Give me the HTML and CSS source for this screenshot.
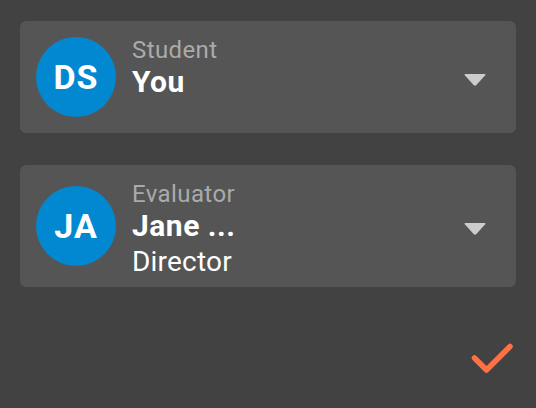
FILE: index.html
```html
<!DOCTYPE html>
<html>
<head>
<meta charset="utf-8">
<link rel="stylesheet" href="styles.css">
</head>
<body>
<div class="panel">
  <div class="card">
    <div class="avatar">DS</div>
    <div class="info">
      <div class="label">Student</div>
      <div class="name">You</div>
    </div>
    <svg class="chev" viewBox="0 0 24 14" width="24" height="14"><path d="M2.5 1 H21.5 Q23.5 1 22 2.6 L13.4 12 Q12 13.4 10.6 12 L2 2.6 Q0.5 1 2.5 1 Z" fill="#cccccc"/></svg>
  </div>
  <div class="card">
    <div class="avatar">JA</div>
    <div class="info">
      <div class="label">Evaluator</div>
      <div class="name">Jane ...</div>
      <div class="role">Director</div>
    </div>
    <svg class="chev" viewBox="0 0 24 14" width="24" height="14"><path d="M2.5 1 H21.5 Q23.5 1 22 2.6 L13.4 12 Q12 13.4 10.6 12 L2 2.6 Q0.5 1 2.5 1 Z" fill="#cccccc"/></svg>
  </div>
  <div class="actions">
    <svg class="check" viewBox="0 0 48 36" width="48" height="36"><polyline points="6.5,18 18.5,30 42,6.5" fill="none" stroke="#ff7043" stroke-width="5.5" stroke-linecap="round" stroke-linejoin="round"/></svg>
  </div>
</div>
</body>
</html>
```
FILE: styles.css
```css
html, body {
  margin: 0;
  padding: 0;
  background: #424242;
  font-family: Roboto, "Liberation Sans", sans-serif;
}
.panel {
  width: 536px;
  height: 408px;
  box-sizing: border-box;
  padding: 21px 20px 0 20px;
  display: flex;
  flex-direction: column;
  gap: 32px;
}
.card {
  background: #555555;
  border-radius: 6px;
  padding: 16px 29px 16px 16px;
  display: flex;
  align-items: center;
}
.avatar {
  width: 80px;
  height: 80px;
  border-radius: 50%;
  background: #0288d1;
  color: #fff;
  font-weight: 700;
  font-size: 34px;
  letter-spacing: 1px;
  display: flex;
  align-items: center;
  justify-content: center;
  flex: none;
}
.info {
  flex: 1;
  margin-left: 16px;
  margin-top: 2px;
  align-self: flex-start;
  display: flex;
  flex-direction: column;
}
.label {
  color: #aaaaaa;
  font-size: 24px;
  line-height: 23px;
  letter-spacing: 0.4px;
}
.name {
  color: #fff;
  font-weight: 700;
  font-size: 30px;
  line-height: 40px;
  letter-spacing: 0.5px;
}
.role {
  color: #fff;
  font-size: 28px;
  line-height: 18px;
  margin-top: 7px;
  letter-spacing: 0.2px;
}
.chev {
  flex: none;
  margin-top: 6px;
}
.actions {
  display: flex;
  justify-content: flex-end;
  margin-top: 21px;
}
```
